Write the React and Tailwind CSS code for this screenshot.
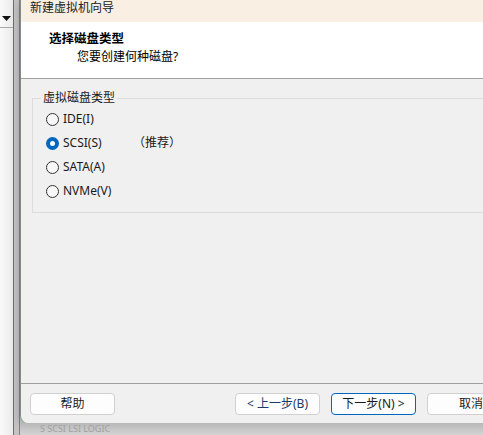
import { useState } from 'react';

const font = { fontFamily: '"Noto Sans", "Noto Sans CJK SC", sans-serif' };

const options = [
  { id: 'ide', label: 'IDE(I)' },
  { id: 'scsi', label: 'SCSI(S)', note: '（推荐）' },
  { id: 'sata', label: 'SATA(A)' },
  { id: 'nvme', label: 'NVMe(V)' },
];

function Radio({ checked }) {
  if (checked) {
    return (
      <span className="w-[13px] h-[13px] rounded-full bg-[#0067c0] flex items-center justify-center shrink-0">
        <span className="w-[5px] h-[5px] rounded-full bg-white" />
      </span>
    );
  }
  return <span className="w-[13px] h-[13px] rounded-full border border-[#333] bg-[#f7f7f7] shrink-0" />;
}

function Button({ children, primary, className = '' }) {
  return (
    <button
      className={`h-[22px] w-[85px] shrink-0 rounded-[4px] bg-[#fdfdfd] text-[12px] text-[#1a1a1a] leading-none ${
        primary ? 'border border-[#0067c0]' : 'border border-[#d0d0d0]'
      } ${className}`}
    >
      {children}
    </button>
  );
}

export default function App() {
  const [disk, setDisk] = useState('scsi');

  return (
    <div className="w-[483px] h-[435px] overflow-hidden flex bg-[#c9c9c9] text-[#1a1a1a]" style={font}>
      {/* main window edge behind the dialog */}
      <div className="w-[13px] shrink-0 flex flex-col bg-gradient-to-r from-[#fafafa] to-[#eaeaea]">
        <div className="h-[28px] border-b border-[#a8a8a8] flex items-center justify-center pt-[10px]">
          <svg width="9" height="5" viewBox="0 0 9 5">
            <path d="M0 0h9L4.5 5z" fill="#111" />
          </svg>
        </div>
      </div>
      <div className="w-[7px] shrink-0 flex">
        <div className="w-[1px] bg-[#6e6e6e]" />
        <div className="w-[5px] bg-[#c3c3c3]" />
        <div className="w-[1px] bg-[#5b8fb0]" />
      </div>

      <div className="flex-1 flex flex-col min-w-0">
        <div className="h-[423px] flex flex-col border-l border-[#8a8a8a] rounded-bl-[8px] overflow-hidden shadow-[0_2px_8px_rgba(0,0,0,0.25)] w-[480px]">
          <div className="h-[22px] bg-[#f9efe3] text-[12px] pl-[9px] pt-[1px] leading-[14px] text-[#222]">新建虚拟机向导</div>

          <div className="h-[57px] bg-white border-b border-[#a0a0a0] pt-[9px]">
            <div className="pl-[28px] text-[12.5px] font-bold leading-[16px] text-black">选择磁盘类型</div>
            <div className="pl-[56px] text-[12px] leading-[16px] mt-[2px] text-black">您要创建何种磁盘?</div>
          </div>

          <div className="flex-1 bg-[#f0f0f0] pt-[12px] pl-[11px]">
            <fieldset className="border border-[#dcdcdc] w-[500px] h-[122px] pl-[13px] pr-[12px] pt-[4px]">
              <legend className="text-[12px] leading-[14px] px-[2px] -ml-[5px]">虚拟磁盘类型</legend>
              <div className="flex flex-col gap-[10px] mt-[3px]">
                {options.map((o) => (
                  <label key={o.id} className="flex items-center h-[14px] cursor-default" onClick={() => setDisk(o.id)}>
                    <Radio checked={disk === o.id} />
                    <span className="ml-[4px] w-[70px] text-[12px] leading-none text-[#1a1a1a]">{o.label}</span>
                    {o.note && <span className="text-[12px] leading-none">{o.note}</span>}
                  </label>
                ))}
              </div>
            </fieldset>
          </div>

          <div className="h-[40px] bg-[#f0f0f0] border-t border-[#a0a0a0] flex items-start pt-[9px] pl-[9px]">
            <Button>帮助</Button>
            <Button className="ml-[120px] text-[#1a3a6a]">&lt; 上一步(B)</Button>
            <Button primary className="ml-[11px]">下一步(N) &gt;</Button>
            <Button className="ml-[11px] text-left pl-[31px]">取消</Button>
          </div>
        </div>
        <div className="flex-1 bg-gradient-to-b from-[#b8b8b8] to-[#d4d4d4] pl-[20px] text-[9px] leading-[10px] text-[#a0a0a0] overflow-hidden pt-[1px]">
          S SCSI LSI LOGIC
        </div>
      </div>
    </div>
  );
}
